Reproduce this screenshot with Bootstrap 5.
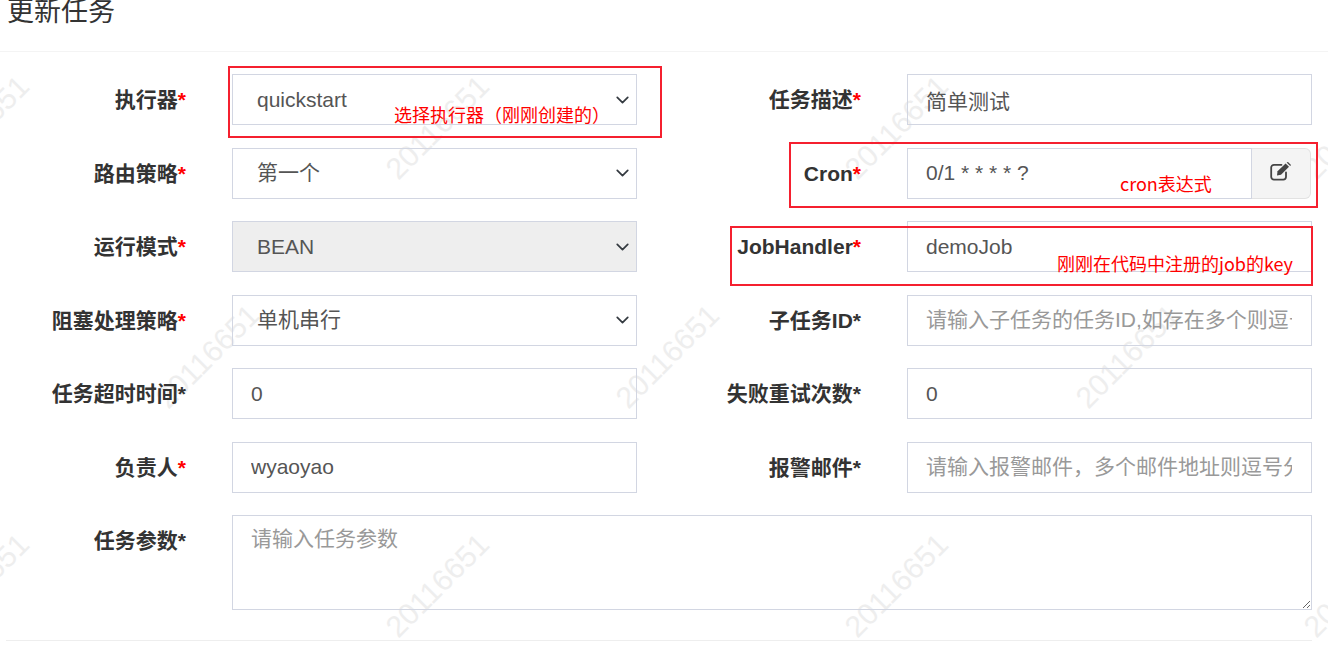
<!DOCTYPE html>
<html>
<head>
    <title>更新任务</title>
    <meta charset="utf-8">
    <meta name="viewport" content="width=device-width, initial-scale=1">
    <link href="https://cdn.jsdelivr.net/npm/bootstrap@5.3.0/dist/css/bootstrap.min.css" rel="stylesheet">
    <style>
        body {
            font-family: "Liberation Sans", "Noto Sans CJK SC", sans-serif;
            background: #fff;
            overflow: hidden;
        }
        .task-page {
            position: relative;
            width: 1328px;
            height: 653px;
            overflow: hidden;
        }
        .task-head {
            height: 52px;
            padding-left: 7px;
            border-bottom: 1px solid #f4f4f4;
        }
        .task-title {
            font-size: 27px;
            line-height: 24px;
            font-weight: 400;
            color: #333;
            margin: 0;
        }
        .task-grid {
            position: relative;
            z-index: 1;
            display: grid;
            grid-template-columns: 232px 405px 270px 405px;
            row-gap: 22.5px;
            padding-top: 22px;
        }
        .task-label {
            padding-right: 46px;
            margin: 0;
            text-align: right;
            white-space: nowrap;
            font-size: 21px;
            font-weight: 700;
            line-height: 51px;
            color: #333;
        }
        .req { color: #f00; }
        .task-grid .form-control,
        .task-grid .form-select {
            height: 51px;
            padding: 0 19px 0 18px;
            font-size: 21px;
            color: #555;
            background-color: transparent;
            border: 1px solid #d2d6e2;
            border-radius: 0;
        }
        .task-grid .form-control::placeholder { color: #999; opacity: 1; }
        .task-grid .form-select {
            padding-left: 24px;
            background-position: right 5px center;
            background-size: 17px 14px;
        }
        .task-grid .form-select:disabled { background-color: #eee; }
        .task-grid textarea.form-control {
            height: 95px;
            padding-top: 6px;
            line-height: 34px;
        }
        .task-wide { grid-column: 2 / span 3; }
        .cron-btn {
            width: 60px;
            height: 51px;
            margin-right: 1px;
            display: flex;
            align-items: center;
            justify-content: center;
            padding: 0 0 3px;
            background: #f4f4f4;
            border: 1px solid #e2e2e2;
            border-left-color: #d2d6e2;
            border-radius: 0 6px 6px 0;
        }
        .task-foot {
            margin: 30px 16px 0 6px;
            border-top: 1px solid #eee;
        }
        .task-mark {
            position: absolute;
            left: 0;
            top: 0;
        }
        .task-mark text {
            font-family: "Liberation Sans", sans-serif;
            font-size: 30px;
            fill: #eeeeee;
        }
        .note-box {
            position: absolute;
            z-index: 2;
            border: 2px solid #f5202f;
        }
        .note-text {
            position: absolute;
            z-index: 2;
            font-family: "Noto Sans CJK SC", sans-serif;
            font-size: 18px;
            line-height: 24px;
            color: #f00;
            white-space: nowrap;
        }
        .box-a { left: 228px; top: 66px; width: 434px; height: 72px; }
        .box-b { left: 789px; top: 142px; width: 529px; height: 66px; }
        .box-c { left: 730px; top: 226px; width: 583px; height: 60px; }
        .text-a { left: 394px; top: 102px; }
        .text-b { left: 1120px; top: 171px; }
        .text-c { left: 1057px; top: 251px; }
    </style>
</head>
<body>
    <div class="task-page">
        <svg class="task-mark" width="1328" height="653">
            <text transform="translate(439 129) rotate(-45)" text-anchor="middle" dominant-baseline="middle">20116651</text>
            <text transform="translate(898 129) rotate(-45)" text-anchor="middle" dominant-baseline="middle">20116651</text>
            <text transform="translate(1357 129) rotate(-45)" text-anchor="middle" dominant-baseline="middle">20116651</text>
            <text transform="translate(-21 129) rotate(-45)" text-anchor="middle" dominant-baseline="middle">20116651</text>
            <text transform="translate(209 358) rotate(-45)" text-anchor="middle" dominant-baseline="middle">20116651</text>
            <text transform="translate(669 358) rotate(-45)" text-anchor="middle" dominant-baseline="middle">20116651</text>
            <text transform="translate(1129 358) rotate(-45)" text-anchor="middle" dominant-baseline="middle">20116651</text>
            <text transform="translate(-21 587) rotate(-45)" text-anchor="middle" dominant-baseline="middle">20116651</text>
            <text transform="translate(439 587) rotate(-45)" text-anchor="middle" dominant-baseline="middle">20116651</text>
            <text transform="translate(898 587) rotate(-45)" text-anchor="middle" dominant-baseline="middle">20116651</text>
            <text transform="translate(1357 587) rotate(-45)" text-anchor="middle" dominant-baseline="middle">20116651</text>
        </svg>

        <div class="task-head">
            <h4 class="task-title">更新任务</h4>
        </div>

        <form class="task-grid">
            <label class="task-label">执行器<span class="req">*</span></label>
            <select class="form-select"><option>quickstart</option></select>
            <label class="task-label">任务描述<span class="req">*</span></label>
            <input type="text" class="form-control" value="简单测试">

            <label class="task-label">路由策略<span class="req">*</span></label>
            <select class="form-select"><option>第一个</option></select>
            <label class="task-label">Cron<span class="req">*</span></label>
            <div class="input-group flex-nowrap">
                <input type="text" class="form-control" value="0/1 * * * * ?">
                <button type="button" class="cron-btn" aria-label="edit">
                    <svg width="22" height="19" viewBox="0 0 22 19" fill="none">
                        <path d="M16 10.500V14.800A2.800 2.800 0 0 1 13.200 17.600H4A2.800 2.800 0 0 1 1.200 14.800V5.600A2.800 2.800 0 0 1 4 2.800H11.500" stroke="#444" stroke-width="1.800" stroke-linecap="round"/>
                        <path d="M7.500 9.200L15.600 1.400L19 4.700L11 12.800L7 13.600Z" fill="#444"/>
                        <path d="M16.600 .5L18 .1L21 3L20.200 4.100Z" fill="#444"/>
                    </svg>
                </button>
            </div>

            <label class="task-label">运行模式<span class="req">*</span></label>
            <select class="form-select" disabled><option>BEAN</option></select>
            <label class="task-label">JobHandler<span class="req">*</span></label>
            <input type="text" class="form-control" value="demoJob">

            <label class="task-label">阻塞处理策略<span class="req">*</span></label>
            <select class="form-select"><option>单机串行</option></select>
            <label class="task-label">子任务ID*</label>
            <input type="text" class="form-control" placeholder="请输入子任务的任务ID,如存在多个则逗号分隔">

            <label class="task-label">任务超时时间*</label>
            <input type="text" class="form-control" value="0">
            <label class="task-label">失败重试次数*</label>
            <input type="text" class="form-control" value="0">

            <label class="task-label">负责人<span class="req">*</span></label>
            <input type="text" class="form-control" value="wyaoyao">
            <label class="task-label">报警邮件*</label>
            <input type="text" class="form-control" placeholder="请输入报警邮件，多个邮件地址则逗号分隔">

            <label class="task-label">任务参数*</label>
            <textarea class="form-control task-wide" placeholder="请输入任务参数"></textarea>
        </form>

        <div class="task-foot"></div>

        <div class="note-box box-a"></div>
        <div class="note-box box-b"></div>
        <div class="note-box box-c"></div>
        <span class="note-text text-a">选择执行器（刚刚创建的）</span>
        <span class="note-text text-b">cron表达式</span>
        <span class="note-text text-c">刚刚在代码中注册的job的key</span>
    </div>

    <script src="https://cdn.jsdelivr.net/npm/bootstrap@5.3.0/dist/js/bootstrap.bundle.min.js"></script>
</body>
</html>
